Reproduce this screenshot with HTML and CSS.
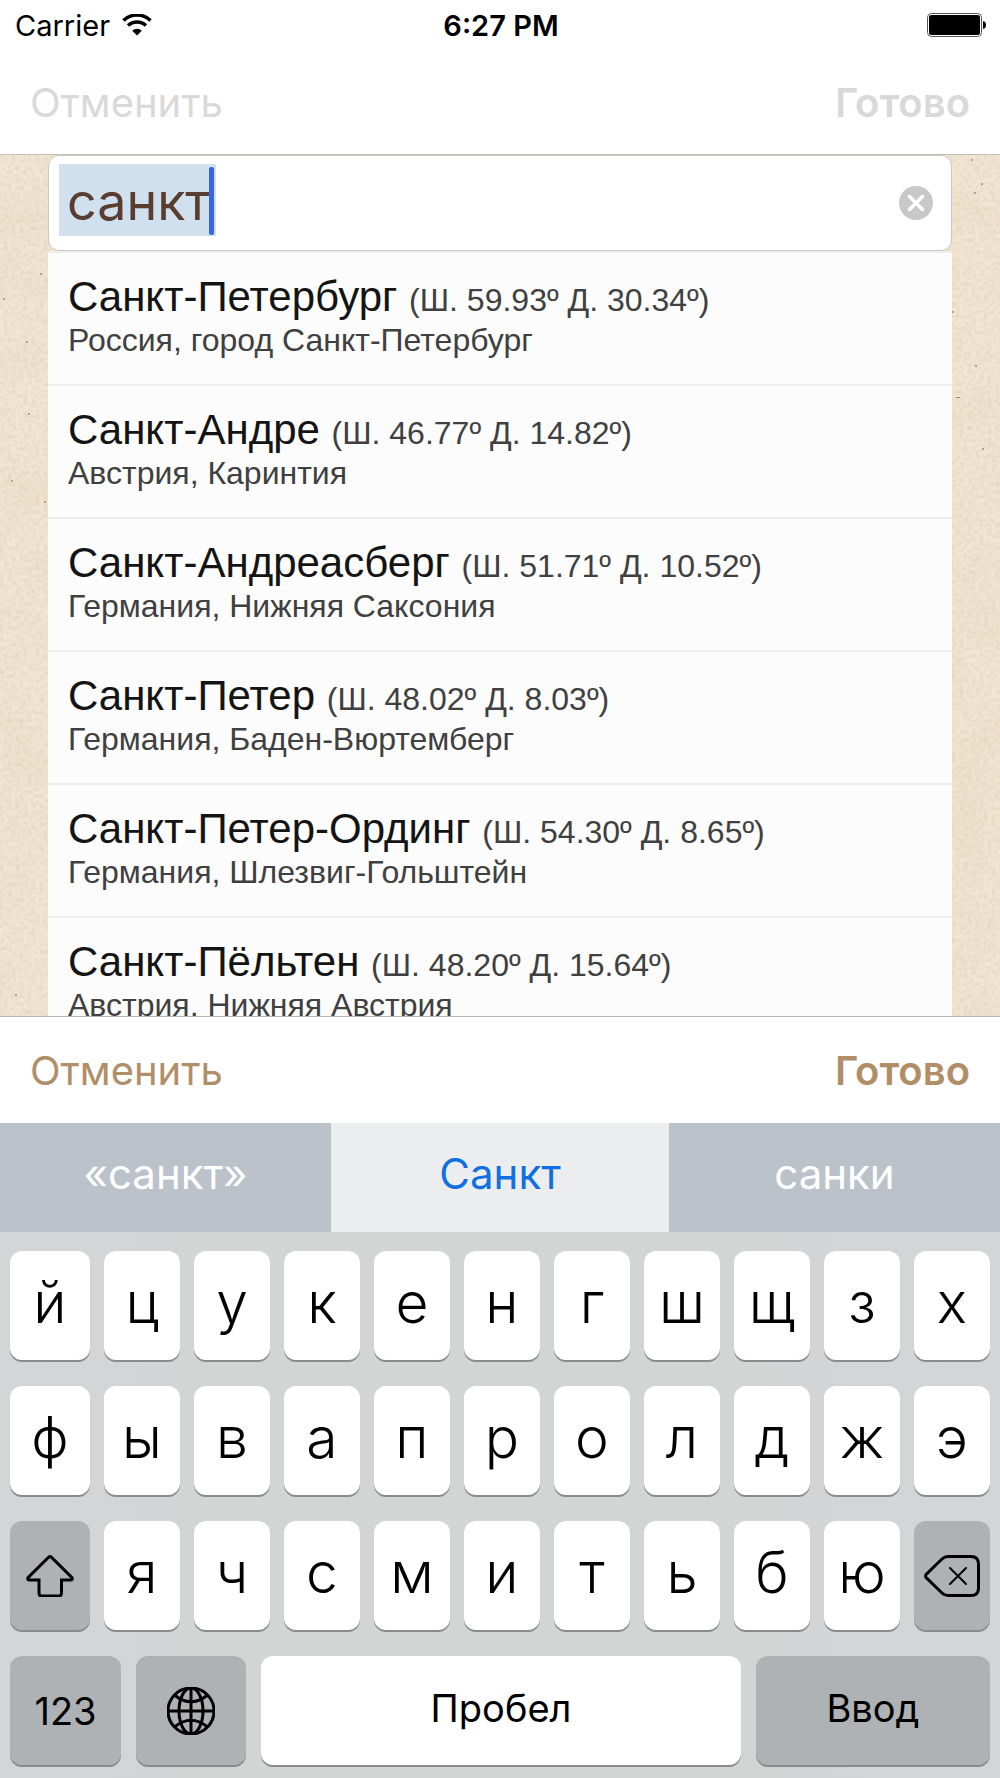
FILE: index.html
```html
<!DOCTYPE html>
<html lang="ru">
<head>
<meta charset="utf-8">
<meta name="viewport" content="width=device-width, initial-scale=1">
<title>Выбор города</title>
<link rel="stylesheet" href="styles.css">
</head>
<body>

<header class="header">
	<div class="status">
		<div class="carrier">
			<span>Carrier</span>
			<svg class="wifi" viewBox="0 0 30 22" aria-hidden="true">
				<path d="M1.500 6.500 A19.500 19.500 0 0 1 28.500 6.500" fill="none" stroke="#000" stroke-width="3.600"/>
				<path d="M6 11.600 A13 13 0 0 1 24 11.600" fill="none" stroke="#000" stroke-width="3.400"/>
				<path d="M15 21.500 L10.200 16.700 A7 7 0 0 1 19.800 16.700 Z"/>
			</svg>
		</div>
		<div class="time">6:27 PM</div>
		<svg class="battery" viewBox="0 0 60 24" aria-hidden="true">
			<rect x="0.500" y="0.500" width="54" height="23" rx="4" fill="#fff" stroke="#555"/>
			<rect x="2" y="2" width="51" height="20" rx="2.500"/>
			<path d="M56 8 Q59 8.500 59 12 Q59 15.500 56 16 Z"/>
		</svg>
	</div>
	<div class="bar">
		<button type="button" class="bar-button" disabled>Отменить</button>
		<button type="button" class="bar-button done" disabled>Готово</button>
	</div>
</header>

<main class="results">
	<svg class="paper" aria-hidden="true">
		<filter id="grain" x="0" y="0" width="100%" height="100%">
			<feTurbulence type="fractalNoise" baseFrequency="0.25" numOctaves="3" seed="4"/>
			<feColorMatrix values="0 0 0 0 0.62  0 0 0 0 0.48  0 0 0 0 0.30  0.7 0 0 0 -0.27"/>
		</filter>
		<filter id="stain" x="0" y="0" width="100%" height="100%">
			<feTurbulence type="fractalNoise" baseFrequency="0.02" numOctaves="2" seed="9"/>
			<feColorMatrix values="0 0 0 0 0.76  0 0 0 0 0.64  0 0 0 0 0.46  0.5 0 0 0 -0.2"/>
		</filter>
		<rect width="100%" height="100%" filter="url(#stain)"/>
		<rect width="100%" height="100%" filter="url(#grain)"/>
		<g fill="#a08c6c">
			<circle cx="4" cy="144" r="1"/>
			<circle cx="41" cy="119" r="1"/>
			<circle cx="27" cy="187" r="1"/>
			<circle cx="29" cy="259" r="1"/>
			<circle cx="12" cy="326" r="1"/>
			<circle cx="45" cy="347" r="1"/>
			<circle cx="16" cy="840" r="1"/>
		</g>
		<svg x="100%" overflow="visible" fill="#a08c6c">
			<circle cx="-28" cy="5" r="1"/>
			<circle cx="-18" cy="29" r="1"/>
			<circle cx="-25" cy="38" r="1"/>
			<circle cx="-47" cy="157" r="1"/>
			<circle cx="-24" cy="211" r="1"/>
			<rect x="-44" y="242" width="4" height="1"/>
			<circle cx="-17" cy="294" r="1"/>
		</svg>
	</svg>

	<div class="search">
		<span class="highlight"></span>
		<input type="text" class="search-input" value="санкт" aria-label="Город">
		<span class="caret"></span>
		<button type="button" class="clear" aria-label="Очистить">
			<svg viewBox="0 0 34 34">
				<circle cx="17" cy="17" r="17" fill="#c8c8c8"/>
				<path d="M10.500 10.500 L23.500 23.500 M23.500 10.500 L10.500 23.500" stroke="#fff" stroke-width="3.500" stroke-linecap="round"/>
			</svg>
		</button>
	</div>

	<ul class="cities">
		<li>
			<div class="city">Санкт-Петербург <small>(Ш. 59.93º Д. 30.34º)</small></div>
			<div class="region">Россия, город Санкт-Петербург</div>
		</li>
		<li>
			<div class="city">Санкт-Андре <small>(Ш. 46.77º Д. 14.82º)</small></div>
			<div class="region">Австрия, Каринтия</div>
		</li>
		<li>
			<div class="city">Санкт-Андреасберг <small>(Ш. 51.71º Д. 10.52º)</small></div>
			<div class="region">Германия, Нижняя Саксония</div>
		</li>
		<li>
			<div class="city">Санкт-Петер <small>(Ш. 48.02º Д. 8.03º)</small></div>
			<div class="region">Германия, Баден-Вюртемберг</div>
		</li>
		<li>
			<div class="city">Санкт-Петер-Ординг <small>(Ш. 54.30º Д. 8.65º)</small></div>
			<div class="region">Германия, Шлезвиг-Гольштейн</div>
		</li>
		<li>
			<div class="city">Санкт-Пёльтен <small>(Ш. 48.20º Д. 15.64º)</small></div>
			<div class="region">Австрия, Нижняя Австрия</div>
		</li>
	</ul>
</main>

<div class="bar toolbar">
	<button type="button" class="bar-button">Отменить</button>
	<button type="button" class="bar-button done">Готово</button>
</div>

<div class="suggestions">
	<button type="button">«санкт»</button>
	<button type="button" class="active">Санкт</button>
	<button type="button">санки</button>
</div>

<div class="keyboard">
	<div class="keys">
		<button type="button">й</button>
		<button type="button">ц</button>
		<button type="button">у</button>
		<button type="button">к</button>
		<button type="button">е</button>
		<button type="button">н</button>
		<button type="button">г</button>
		<button type="button">ш</button>
		<button type="button">щ</button>
		<button type="button">з</button>
		<button type="button">х</button>
	</div>
	<div class="keys">
		<button type="button">ф</button>
		<button type="button">ы</button>
		<button type="button">в</button>
		<button type="button">а</button>
		<button type="button">п</button>
		<button type="button">р</button>
		<button type="button">о</button>
		<button type="button">л</button>
		<button type="button">д</button>
		<button type="button">ж</button>
		<button type="button">э</button>
	</div>
	<div class="keys">
		<button type="button" class="dark" aria-label="Shift">
			<svg class="shift" viewBox="0 0 48 42">
				<path d="M22.700 2.200 Q24 1 25.300 2.200 L46 22.700 Q47 25 44.500 25 H35.500 V38 Q35.500 41 32.500 41 H16 Q13 41 13 38 V25 H3.500 Q1 25 2 22.700 Z"/>
			</svg>
		</button>
		<button type="button">я</button>
		<button type="button">ч</button>
		<button type="button">с</button>
		<button type="button">м</button>
		<button type="button">и</button>
		<button type="button">т</button>
		<button type="button">ь</button>
		<button type="button">б</button>
		<button type="button">ю</button>
		<button type="button" class="dark" aria-label="Удалить">
			<svg class="backspace" viewBox="0 0 56 42">
				<path d="M2.200 22.600 Q0.800 21 2.200 19.400 L18 4 Q20.500 1.500 24 1.500 H47 Q54.500 1.500 54.500 9 V33 Q54.500 40.500 47 40.500 H24 Q20.500 40.500 18 38 Z"/>
				<path class="thin" d="M26 13 L42 29 M42 13 L26 29"/>
			</svg>
		</button>
	</div>
	<div class="keys bottom">
		<button type="button" class="dark">123</button>
		<button type="button" class="dark" aria-label="Сменить язык">
			<svg class="globe" viewBox="0 0 48 48">
				<circle cx="24" cy="24" r="23"/>
				<ellipse cx="24" cy="24" rx="12" ry="23"/>
				<path d="M24 1 V47 M1 24 H47 M8 8.500 Q24 21 40 8.500 M8 39.500 Q24 27 40 39.500"/>
			</svg>
		</button>
		<button type="button" class="word">Пробел</button>
		<button type="button" class="dark word">Ввод</button>
	</div>
</div>

</body>
</html>
```
FILE: styles.css
```css
*{
	box-sizing: border-box;
}

body{
	margin: 0;
	height: 100vh;
	display: flex;
	flex-direction: column;
	background: #fff;
	color: #000;
	font-family: Inter, "Noto Sans", sans-serif;
}

button{
	margin: 0;
	padding: 0;
	border: 0;
	background: none;
	color: inherit;
	font: inherit;
	cursor: pointer;
}

/* status bar and navigation */

.header{
	border-bottom: 1px solid #c2bfb9;
}

.status{
	height: 50px;
	padding: 0 13px 0 15px;
	display: grid;
	grid-template-columns: 1fr auto 1fr;
	align-items: center;
	font-size: 29px;
}

.carrier{
	display: flex;
	align-items: center;
	gap: 12px;
}

.wifi{
	width: 30px;
	height: 22px;
}

.time{
	font-weight: 600;
}

.battery{
	width: 60px;
	height: 24px;
	justify-self: end;
}

.bar{
	height: 104px;
	padding: 0 30px;
	display: flex;
	align-items: center;
	justify-content: space-between;
}

.bar-button{
	font-size: 40px;
	color: #b08e68;
}

.bar-button:disabled{
	color: #d9d9d9;
}

.done{
	font-weight: 600;
}

.toolbar{
	height: 107px;
	border-top: 1px solid #b9b7b5;
}

/* search and results */

.results{
	position: relative;
	flex: 1;
	min-height: 0;
	padding: 0 48px;
	overflow: hidden;
	background: #f1e6d4;
}

.paper{
	position: absolute;
	left: 0;
	top: 0;
	width: 100%;
	height: 100%;
}

.search{
	position: relative;
	height: 96px;
	padding: 0 18px;
	display: flex;
	align-items: center;
	background: #fff;
	border: 1px solid #cbc8be;
	border-radius: 11px;
}

.highlight{
	position: absolute;
	left: 10px;
	top: 8px;
	width: 157px;
	height: 72px;
	background: #d1e0ef;
}

.search-input{
	position: relative;
	flex: 1;
	min-width: 0;
	height: 94px;
	padding: 0 0 4px;
	border: 0;
	outline: none;
	background: none;
	color: #593d2e;
	font-family: inherit;
	font-size: 52px;
}

.caret{
	position: absolute;
	left: 160px;
	top: 11px;
	width: 5px;
	height: 68px;
	border-radius: 2px;
	background: #3466e3;
}

.clear{
	width: 34px;
	height: 34px;
}

.clear svg{
	display: block;
}

.cities{
	position: relative;
	margin: 0;
	padding: 0;
	list-style: none;
	background: #fcfcfc;
	font-family: "Liberation Sans", Arial, sans-serif;
}

.cities li{
	padding: 22px 20px 23px;
	border-top: 2px solid #eee;
	white-space: nowrap;
}

.city{
	height: 44px;
	line-height: 44px;
	font-size: 42px;
	color: #141414;
}

.city small,
.region{
	font-size: 32px;
	color: #404040;
}

.region{
	line-height: 42px;
}

/* keyboard */

.suggestions{
	height: 109px;
	display: grid;
	grid-template-columns: 331fr 338fr 331fr;
	font-size: 42px;
	color: #fff;
}

.suggestions button{
	padding-bottom: 8px;
	background: #bbc2ca;
}

.suggestions .active{
	background: #ebedef;
	color: #116fe4;
}

.keyboard{
	padding: 19px 10px 13px;
	display: grid;
	gap: 26px;
	background: linear-gradient(90deg, #d3d5d8, #d2d5d4 20%, #d2d5d4 75%, #d3d5d8);
}

.keys{
	display: grid;
	grid-template-columns: 80fr repeat(10, 76fr);
	gap: 14px;
}

.keys button{
	height: 109px;
	padding-bottom: 6px;
	border-radius: 12px;
	background: #fff;
	box-shadow: 0 2px 0 #898a8b;
	font-size: 57px;
	font-weight: 350;
}

.keys .dark{
	padding: 0;
	display: flex;
	align-items: center;
	justify-content: center;
	background: #afb2b4;
}

.bottom{
	grid-template-columns: 111fr 110fr 480fr 234fr;
	gap: 15px;
}

.bottom button{
	font-size: 38px;
	font-weight: 400;
}

.keys .word{
	padding-bottom: 6px;
}

.keys svg{
	fill: none;
	stroke: #000;
	stroke-width: 3;
}

.shift{
	width: 48px;
	height: 42px;
}

.backspace{
	width: 56px;
	height: 42px;
}

.backspace .thin{
	stroke-width: 2;
	stroke-linecap: round;
}

.globe{
	width: 48px;
	height: 48px;
}
```
